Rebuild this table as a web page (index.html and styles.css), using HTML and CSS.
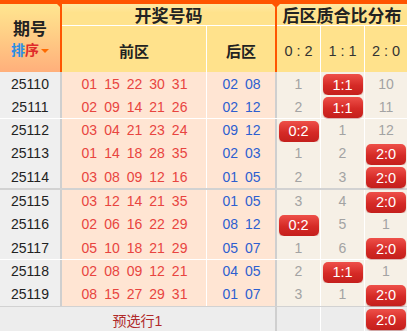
FILE: index.html
```html
<!DOCTYPE html>
<html lang="zh">
<head>
<meta charset="utf-8">
<title>后区质合比分布</title>
<link rel="stylesheet" href="styles.css">
</head>
<body>
<div class="board">
  <div class="head">
    <div class="h-issue">
      <div class="h-issue-title">期号</div>
      <div class="h-sort"><span class="s-blue">排</span><span class="s-red">序</span><span class="tri"></span></div>
    </div>
    <div class="h-draw">
      <div class="h-title">开奖号码</div>
      <div class="h-sub">
        <div class="h-front">前区</div>
        <div class="h-back">后区</div>
      </div>
    </div>
    <div class="h-dist">
      <div class="h-title">后区质合比分布</div>
      <div class="h-sub3">
        <div class="h-c">0 : 2</div>
        <div class="h-c">1 : 1</div>
        <div class="h-c last">2 : 0</div>
      </div>
    </div>
  </div>

  <div class="rows">
    <div class="row"><div class="issue">25110</div><div class="front"><span>01</span><span>15</span><span>22</span><span>30</span><span>31</span></div><div class="back"><span>02</span><span>08</span></div><div class="c">1</div><div class="c"><span class="badge">1:1</span></div><div class="c last">10</div></div>
    <div class="row"><div class="issue">25111</div><div class="front"><span>02</span><span>09</span><span>14</span><span>21</span><span>26</span></div><div class="back"><span>02</span><span>12</span></div><div class="c">2</div><div class="c"><span class="badge">1:1</span></div><div class="c last">11</div></div>
    <div class="row"><div class="issue">25112</div><div class="front"><span>03</span><span>04</span><span>21</span><span>23</span><span>24</span></div><div class="back"><span>09</span><span>12</span></div><div class="c"><span class="badge">0:2</span></div><div class="c">1</div><div class="c last">12</div></div>
    <div class="row"><div class="issue">25113</div><div class="front"><span>01</span><span>14</span><span>18</span><span>28</span><span>35</span></div><div class="back"><span>02</span><span>03</span></div><div class="c">1</div><div class="c">2</div><div class="c last"><span class="badge">2:0</span></div></div>
    <div class="row grp"><div class="issue">25114</div><div class="front"><span>03</span><span>08</span><span>09</span><span>12</span><span>16</span></div><div class="back"><span>01</span><span>05</span></div><div class="c">2</div><div class="c">3</div><div class="c last"><span class="badge">2:0</span></div></div>
    <div class="row"><div class="issue">25115</div><div class="front"><span>03</span><span>12</span><span>14</span><span>21</span><span>35</span></div><div class="back"><span>01</span><span>05</span></div><div class="c">3</div><div class="c">4</div><div class="c last"><span class="badge">2:0</span></div></div>
    <div class="row"><div class="issue">25116</div><div class="front"><span>02</span><span>06</span><span>16</span><span>22</span><span>29</span></div><div class="back"><span>08</span><span>12</span></div><div class="c"><span class="badge">0:2</span></div><div class="c">5</div><div class="c last">1</div></div>
    <div class="row"><div class="issue">25117</div><div class="front"><span>05</span><span>10</span><span>18</span><span>21</span><span>29</span></div><div class="back"><span>05</span><span>07</span></div><div class="c">1</div><div class="c">6</div><div class="c last"><span class="badge">2:0</span></div></div>
    <div class="row"><div class="issue">25118</div><div class="front"><span>02</span><span>08</span><span>09</span><span>12</span><span>21</span></div><div class="back"><span>04</span><span>05</span></div><div class="c">2</div><div class="c"><span class="badge">1:1</span></div><div class="c last">1</div></div>
    <div class="row grp"><div class="issue">25119</div><div class="front"><span>08</span><span>15</span><span>27</span><span>29</span><span>31</span></div><div class="back"><span>01</span><span>07</span></div><div class="c">3</div><div class="c">1</div><div class="c last"><span class="badge">2:0</span></div></div>
  </div>

  <div class="foot">
    <div class="f-label">预选行1</div>
    <div class="fc"></div>
    <div class="fc"></div>
    <div class="fc last"><span class="badge">2:0</span></div>
  </div>
</div>
</body>
</html>
```

FILE: styles.css
```css
* { box-sizing: border-box; }

html, body {
  margin: 0;
  padding: 0;
  background: #ffffff;
}

body {
  font-family: "Liberation Sans", Arial, "Noto Sans CJK SC", sans-serif;
  color: #222;
  width: 407px;
  height: 331px;
  overflow: hidden;
}

.board {
  width: 407px;
}

/* ---------- header ---------- */
.head {
  display: grid;
  grid-template-columns: 62px 215px 130px;
  height: 72px;
  border-top: 4px solid #ff5500;
}

.h-issue {
  position: relative;
  border-right: 2px solid #ff5500;
  background: linear-gradient(#ffe690, #ffd488 35%, #ffaf7b);
  display: flex;
  flex-direction: column;
  justify-content: center;
  align-items: center;
  padding-top: 2px;
}

.h-issue::after,
.h-draw::after {
  content: "";
  position: absolute;
  top: 0;
  right: -5px;
  width: 0;
  height: 0;
  border-left: 4px solid transparent;
  border-right: 4px solid transparent;
  border-top: 4px solid #ff5500;
}

.h-issue-title {
  font-size: 17px;
  font-weight: bold;
  line-height: 21px;
  color: #222;
}

.h-sort {
  display: flex;
  align-items: center;
  font-size: 14px;
  font-weight: bold;
  line-height: 20px;
}

.s-blue { color: #2a8ee6; }
.s-red { color: #e02a2a; }

.tri {
  width: 0;
  height: 0;
  margin-left: 2px;
  margin-top: 2px;
  border-left: 4px solid transparent;
  border-right: 4px solid transparent;
  border-top: 4px solid #ff6a00;
}

.h-draw {
  position: relative;
  border-right: 2px solid #ff5500;
  background: #ffe28c;
  display: flex;
  flex-direction: column;
}

.h-dist {
  background: #ffe28c;
  display: flex;
  flex-direction: column;
}

.h-title {
  height: 22px;
  border-bottom: 1px solid #ffffff;
  display: flex;
  align-items: center;
  justify-content: center;
  font-size: 17px;
  font-weight: bold;
  color: #222;
  background: linear-gradient(#ffeaa4, #ffe28c 40%);
}

.h-sub,
.h-sub3 {
  flex: 1;
  display: flex;
}

.h-front,
.h-back {
  display: flex;
  align-items: center;
  justify-content: center;
  font-size: 15px;
  font-weight: bold;
  color: #222;
  padding-top: 2px;
}

.h-front {
  width: 145px;
  border-right: 1px solid #ffffff;
}

.h-back {
  flex: 1;
}

.h-c {
  width: 44px;
  border-right: 1px solid #ffffff;
  display: flex;
  align-items: center;
  justify-content: center;
  font-size: 14.5px;
  color: #333;
  padding-top: 4px;
}

.h-c.last {
  border-right: 0;
  flex: 1;
}

/* ---------- body rows ---------- */
.row {
  display: grid;
  grid-template-columns: 62px 145px 70px 44px 44px 42px;
  height: 23.33px;
  border-bottom: 1px solid #ffffff;
}

.row.grp {
  height: 24.33px;
  border-bottom: 2px solid #d2d2d2;
}

.issue {
  background: #efefef;
  border-right: 2px solid #cfcfcf;
  display: flex;
  align-items: center;
  justify-content: center;
  font-size: 14px;
  color: #222;
}

.front,
.back {
  background: #ffe5d3;
  display: flex;
  align-items: center;
  justify-content: center;
  gap: 7px;
  font-size: 14px;
}

.front {
  color: #e8443f;
  border-right: 1px solid #ffffff;
  padding-left: 1px;
}

.back {
  color: #2d5fd0;
  border-right: 2px solid #cfcfcf;
  padding-left: 1px;
}

.c {
  background: #f6f0e6;
  border-right: 1px solid #ffffff;
  display: flex;
  align-items: center;
  justify-content: center;
  font-size: 14px;
  color: #a3a3a3;
}

.c.last {
  border-right: 0;
}

.badge {
  display: inline-flex;
  align-items: center;
  justify-content: center;
  width: 40px;
  height: 21px;
  margin-top: 2px;
  border-radius: 5px;
  background: linear-gradient(#ee5049, #d52a26 55%, #c41f1c);
  box-shadow: 0 1px 1px rgba(150, 20, 20, 0.35);
  color: #ffffff;
  font-size: 14.5px;
}

/* ---------- footer ---------- */
.foot {
  display: grid;
  grid-template-columns: 277px 44px 44px 42px;
  height: 24px;
}

.f-label {
  background: #ededed;
  border-right: 2px solid #cfcfcf;
  display: flex;
  align-items: center;
  justify-content: center;
  font-size: 14px;
  color: #b02a2a;
  padding-top: 2px;
}

.fc {
  background: #ececec;
  border-right: 1px solid #ffffff;
  display: flex;
  align-items: center;
  justify-content: center;
}

.fc.last {
  border-right: 0;
}

.fc .badge {
  margin-top: 1px;
}
```
